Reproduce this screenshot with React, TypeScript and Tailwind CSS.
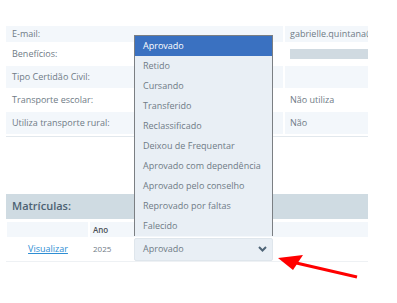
import React from 'react';

const infoRows = [
  { label: 'E-mail:', value: 'gabrielle.quintana@', h: 'h-[16px]', light: true },
  { label: 'Benefícios:', value: '', bar: true, h: 'h-[24px]', light: false },
  { label: 'Tipo Certidão Civil:', value: '', h: 'h-[22px]', light: true },
  { label: 'Transporte escolar:', value: 'Não utiliza', h: 'h-[24px]', light: false },
  { label: 'Utiliza transporte rural:', value: 'Não', h: 'h-[22px]', light: true },
];

const situacoes = [
  'Aprovado',
  'Retido',
  'Cursando',
  'Transferido',
  'Reclassificado',
  'Deixou de Frequentar',
  'Aprovado com dependência',
  'Aprovado pelo conselho',
  'Reprovado por faltas',
  'Falecido',
];

export default function App() {
  return (
    <div className="relative h-[303px] w-[397px] overflow-hidden bg-white font-['Open_Sans',sans-serif] text-[9px] text-[#6f7b86]">
      <div className="ml-[6px] w-[362px] pt-[26px]">
        {infoRows.map((row) => (
          <div key={row.label} className={`flex gap-[2px] ${row.h}`}>
            <div
              className={`flex w-[277px] items-center pl-[6px] ${row.light ? 'bg-[#f3f7fb]' : 'bg-white'}`}
            >
              {row.label}
            </div>
            <div
              className={`flex w-[83px] items-center overflow-hidden whitespace-nowrap pl-[5px] ${row.light ? 'bg-[#f3f7fb]' : 'bg-white'}`}
            >
              {row.bar ? <div className="h-[10px] w-full bg-[#d0dae1]" /> : row.value}
            </div>
          </div>
        ))}
        <div className="mt-[2px] h-[1px] bg-[#e2e8ed]" />

        <div className="mt-[57px] flex h-[25px] items-center bg-[#cfdbe2] pl-[6px] text-[11px] font-semibold text-[#4d6273]">
          Matrículas:
        </div>
        <div className="mt-[3px] flex h-[15px] gap-[2px] text-[8px] font-semibold text-[#4a4f55]">
          <div className="ml-[1px] w-[81px] bg-[#f3f7fb]" />
          <div className="flex flex-1 items-center bg-[#f3f7fb] pl-[3px]">Ano</div>
        </div>
        <div className="flex h-[25px] items-center border-b border-[#eef1f4]">
          <div className="flex w-[84px] justify-center">
            <span className="text-[#2e8ed3] underline">Visualizar</span>
          </div>
          <div className="w-[44px] pl-[3px] text-[8px]">2025</div>
          <div className="flex h-[23px] w-[139px] items-center justify-between rounded-[2px] border border-[#dfe6ec] bg-[#e9eff5] pl-[8px] pr-[5px]">
            <span>Aprovado</span>
            <svg width="9" height="6" viewBox="0 0 9 6" fill="none">
              <path d="M1 1l3.5 3.5L8 1" stroke="#4f6577" strokeWidth="2" />
            </svg>
          </div>
        </div>
      </div>

      <ul className="absolute left-[134px] top-[35px] w-[139px] border border-b-0 border-[#7b7f83] bg-[#e9eff5]">
        {situacoes.map((s, i) => (
          <li
            key={s}
            className={`flex h-[20px] items-center whitespace-nowrap pl-[8px] ${i === 0 ? 'bg-[#3a71c1] text-white' : ''}`}
          >
            {s}
          </li>
        ))}
      </ul>

      <svg className="absolute left-0 top-0" width="397" height="303" viewBox="0 0 397 303">
        <line x1="357" y1="277" x2="292" y2="262" stroke="#ff0000" strokeWidth="3" />
        <polygon points="278,258 303,255 293,270" fill="#ff0000" />
      </svg>
    </div>
  );
}
